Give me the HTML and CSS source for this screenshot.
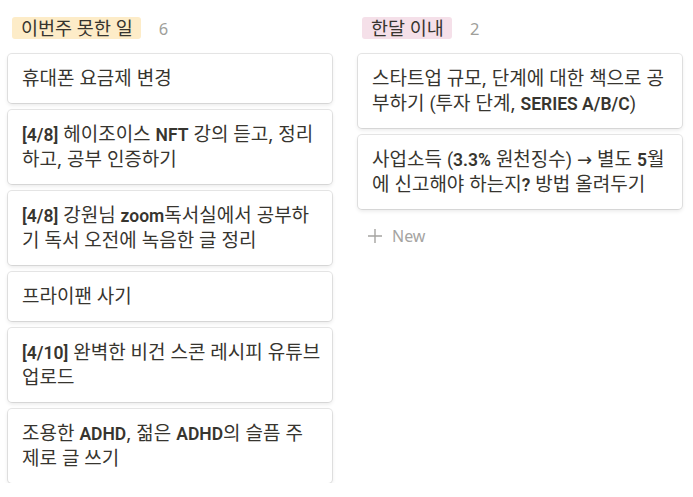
FILE: index.html
```html
<!DOCTYPE html>
<html lang="ko">
<head>
<meta charset="utf-8">
<link rel="stylesheet" href="styles.css">
</head>
<body>
<div class="board">
  <section class="column">
    <header class="col-head">
      <span class="tag tag-yellow">이번주 못한 일</span>
      <span class="count">6</span>
    </header>
    <div class="cards">
      <div class="card">휴대폰 요금제 변경</div>
      <div class="card"><span class="lat">[4/8]</span> 헤이조이스 <span class="lat">NFT</span> 강의 듣고, 정리<br>하고, 공부 인증하기</div>
      <div class="card"><span class="lat">[4/8]</span> 강원님 <span class="lat">zoom</span>독서실에서 공부하<br>기 독서 오전에 녹음한 글 정리</div>
      <div class="card">프라이팬 사기</div>
      <div class="card"><span class="lat">[4/10]</span> 완벽한 비건 스콘 레시피 유튜브<br>업로드</div>
      <div class="card">조용한 <span class="lat">ADHD</span>, 젊은 <span class="lat">ADHD</span>의 슬픔 주<br>제로 글 쓰기</div>
    </div>
  </section>
  <section class="column">
    <header class="col-head">
      <span class="tag tag-pink">한달 이내</span>
      <span class="count">2</span>
    </header>
    <div class="cards">
      <div class="card">스타트업 규모, 단계에 대한 책으로 공<br>부하기 <span class="p">(</span>투자 단계, <span class="lat">SERIES A/B/C</span><span class="p">)</span></div>
      <div class="card">사업소득 <span class="p">(</span><span class="lat">3.3%</span> 원천징수<span class="p">)</span> <span class="arrow">→</span> 별도 <span class="lat">5</span>월<br>에 신고해야 하는지<span class="lat">?</span> 방법 올려두기</div>
    </div>
    <div class="new-row">
      <svg class="plus" width="16" height="16" viewBox="0 0 16 16"><path d="M8 1v14M1 8h14" stroke="#a5a4a1" stroke-width="1.4" fill="none"/></svg>
      <span class="new-label">New</span>
    </div>
  </section>
</div>
</body>
</html>
```
FILE: styles.css
```css
html, body {
  margin: 0;
  padding: 0;
  background: #ffffff;
}
body {
  font-family: "Noto Sans", "Noto Sans CJK KR", sans-serif;
  color: #37352f;
}
.board {
  display: flex;
  gap: 26px;
  padding: 17px 10px 0 8px;
}
.column {
  width: 324px;
  flex: none;
}
.col-head {
  display: flex;
  align-items: center;
  height: 22px;
  padding-left: 4px;
  margin-bottom: 15px;
}
.tag {
  display: inline-flex;
  align-items: center;
  height: 22px;
  padding: 0 8px 0 9px;
  border-radius: 3px;
  font-size: 18.5px;
  line-height: 22px;
  white-space: nowrap;
}
.tag-yellow { background: #fdecc8; }
.tag-pink { background: #f5e0e9; }
.count {
  margin-left: 18px;
  font-size: 16.5px;
  color: #a09f9b;
}
.cards {
  display: flex;
  flex-direction: column;
  gap: 7px;
}
.card {
  background: #fff;
  border-radius: 4px;
  box-shadow: rgba(15, 15, 15, 0.1) 0 0 0 1px, rgba(15, 15, 15, 0.1) 0 2px 4px;
  padding: 12px 14px 12px 14px;
  font-size: 19px;
  line-height: 25px;
  white-space: nowrap;
}
.lat {
  font-family: "Roboto", sans-serif;
  font-size: 17.5px;
  font-weight: 600;
  line-height: 1;
}
.p {
  font-family: "Roboto", sans-serif;
  font-size: 18px;
  line-height: 1;
}
.arrow {
  font-family: "DejaVu Sans", sans-serif;
  font-size: 18px;
  line-height: 1;
}
.new-row {
  display: flex;
  align-items: center;
  gap: 9px;
  height: 32px;
  padding-left: 9px;
  margin-top: 11px;
  color: #a5a4a1;
  font-size: 16px;
}
.plus { flex: none; }
```
